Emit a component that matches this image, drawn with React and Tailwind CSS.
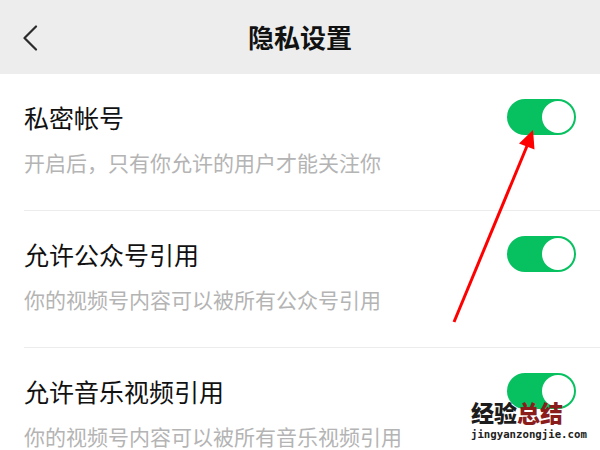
import React, { useState } from "react";

const settings = [
  { id: "private", title: "私密帐号", desc: "开启后，只有你允许的用户才能关注你" },
  { id: "mp", title: "允许公众号引用", desc: "你的视频号内容可以被所有公众号引用" },
  { id: "music", title: "允许音乐视频引用", desc: "你的视频号内容可以被所有音乐视频引用" },
];

const Toggle = ({ on, onClick }) => (
  <button
    onClick={onClick}
    className={`flex h-[36px] w-[69px] shrink-0 items-center rounded-full p-[2px] ${
      on ? "justify-end bg-[#07c160]" : "justify-start bg-[#e5e5e5]"
    }`}
  >
    <span className="block h-[32px] w-[32px] rounded-full bg-white" />
  </button>
);

const App = () => {
  const [values, setValues] = useState({ private: true, mp: true, music: true });

  const flip = (id) => setValues((prev) => ({ ...prev, [id]: !prev[id] }));

  return (
    <div
      className="relative h-[450px] w-[600px] overflow-hidden bg-white"
      style={{ fontFamily: '"Noto Sans CJK SC", "Noto Sans", sans-serif' }}
    >
      {/* header */}
      <div className="relative flex h-[74px] items-center justify-center bg-[#ededed]">
        <button className="absolute left-[22px] top-[25px]">
          <svg width="16" height="26" viewBox="0 0 16 26" fill="none">
            <path d="M14 1.5 L2.5 13 L14 24.5" stroke="#2b2b2b" strokeWidth="2.2" strokeLinecap="round" strokeLinejoin="round" />
          </svg>
        </button>
        <h1 className="text-[26px] font-bold leading-[30px] text-[#111]">隐私设置</h1>
      </div>

      {/* list */}
      <div>
        {settings.map((s) => (
          <div key={s.id} className="ml-6 border-b border-[#ececec] pb-[35px] pr-6 pt-[28px]">
            <div className="flex h-[30px] items-center justify-between">
              <span className="text-[25px] leading-[30px] text-[#111]">{s.title}</span>
              <Toggle on={values[s.id]} onClick={() => flip(s.id)} />
            </div>
            <p className="mt-[17px] text-[21px] leading-[26px] text-[#b4b4b4]">{s.desc}</p>
          </div>
        ))}
      </div>

      {/* red arrow annotation */}
      <svg className="pointer-events-none absolute left-0 top-0" width="600" height="450">
        <line x1="454" y1="322" x2="527" y2="146" stroke="#f00" strokeWidth="3" />
        <polygon points="533,130 519,143.5 534.5,149.5" fill="#f00" />
      </svg>

      {/* watermark */}
      <div className="pointer-events-none absolute left-[471px] top-[399px] flex flex-col">
        <div className="flex h-[25px] items-center text-[23px] font-black leading-[24px]">
          <span className="text-[#1c1c1c]">经验</span>
          <span className="text-[#8a1c1c]">总结</span>
        </div>
        <div
          className="mt-[5px] text-[10.7px] font-bold leading-[12px] text-[#222]"
          style={{ fontFamily: '"DejaVu Sans Mono", monospace' }}
        >
          jingyanzongjie.com
        </div>
      </div>
    </div>
  );
};

export default App;
